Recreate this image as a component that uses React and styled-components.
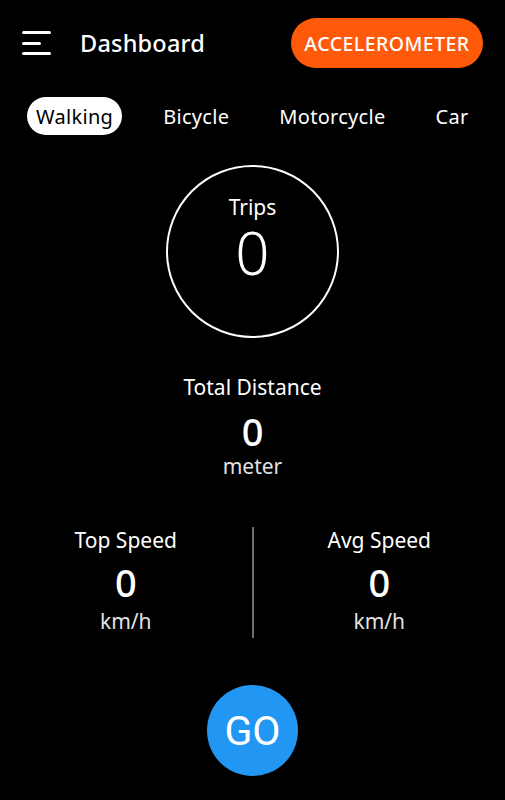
import React from "react";
import styled, { createGlobalStyle } from "styled-components";

const Global = createGlobalStyle`
  html, body { margin: 0; padding: 0; background: #000; }
  body { font-family: "Noto Sans", "DejaVu Sans", sans-serif; color: #fff; }
  * { box-sizing: border-box; }
`;

const Page = styled.div`
  width: 505px;
  height: 800px;
  background: #000;
  display: flex;
  flex-direction: column;
  overflow: hidden;
`;

const Header = styled.header`
  display: flex;
  align-items: center;
  padding: 18px 22px 0 22px;
  height: 68px;
`;

const MenuButton = styled.button`
  width: 29px;
  height: 24px;
  padding: 0;
  border: 0;
  background: none;
  display: flex;
  flex-direction: column;
  justify-content: space-between;
  align-items: flex-start;
  cursor: pointer;
`;

const MenuLine = styled.span`
  display: block;
  height: 3px;
  width: ${(p) => p.$w}px;
  border-radius: 2px;
  background: #fff;
`;

const Title = styled.h1`
  margin: 0 0 0 29px;
  font-size: 23.5px;
  font-weight: 500;
  letter-spacing: 0.2px;
`;

const AccelButton = styled.button`
  margin-left: auto;
  width: 192px;
  height: 50px;
  border-radius: 25px;
  border: 0;
  background: #ff5a0a;
  color: #fff;
  font-family: inherit;
  font-size: 19.5px;
  font-weight: 500;
  letter-spacing: 0.45px;
  padding: 0;
  cursor: pointer;
`;

const Tabs = styled.nav`
  display: flex;
  align-items: center;
  gap: 32px;
  padding: 29px 0 0 27px;
`;

const Tab = styled.button`
  height: 38px;
  padding: 0 9px;
  border: 0;
  border-radius: 19px;
  background: ${(p) => (p.$active ? "#fff" : "transparent")};
  color: ${(p) => (p.$active ? "#000" : "#fff")};
  font-family: inherit;
  font-size: 20px;
  letter-spacing: 0.3px;
  white-space: nowrap;
  cursor: pointer;
`;

const Ring = styled.div`
  align-self: center;
  margin-top: 30px;
  width: 173px;
  height: 173px;
  border: 2px solid #fff;
  border-radius: 50%;
  display: flex;
  flex-direction: column;
  align-items: center;
  padding-top: 27px;
`;

const Label = styled.div`
  font-size: 21px;
  line-height: 26px;
  color: #fff;
`;

const BigValue = styled.div`
  font-size: 60px;
  font-weight: 300;
  line-height: 64px;
`;

const Block = styled.div`
  display: flex;
  flex-direction: column;
  align-items: center;
  margin-top: 36px;
`;

const Value = styled.div`
  font-size: 38px;
  font-weight: 500;
  line-height: 44px;
  margin-top: ${(p) => p.$mt}px;
`;

const Unit = styled.div`
  font-size: 21px;
  line-height: 26px;
  color: #e2e2e2;
  margin-top: ${(p) => p.$mt}px;
`;

const StatsRow = styled.div`
  display: grid;
  grid-template-columns: 1fr 2px 1fr;
  margin-top: 48px;
`;

const Divider = styled.div`
  width: 2px;
  height: 111px;
  background: #6e6e6e;
`;

const StatCol = styled.div`
  display: flex;
  flex-direction: column;
  align-items: center;
`;

const GoButton = styled.button`
  align-self: center;
  margin-top: 47px;
  width: 91px;
  height: 91px;
  border-radius: 50%;
  border: 0;
  background: #2196f3;
  color: #fff;
  font-family: Roboto, "Noto Sans", sans-serif;
  font-size: 41px;
  cursor: pointer;
  padding: 0;
`;

export default function App() {
  const tabs = ["Walking", "Bicycle", "Motorcycle", "Car"];
  return (
    <>
      <Global />
      <Page>
        <Header>
          <MenuButton aria-label="menu">
            <MenuLine $w={29} />
            <MenuLine $w={19} />
            <MenuLine $w={29} />
          </MenuButton>
          <Title>Dashboard</Title>
          <AccelButton>ACCELEROMETER</AccelButton>
        </Header>
        <Tabs>
          {tabs.map((t, i) => (
            <Tab key={t} $active={i === 0}>
              {t}
            </Tab>
          ))}
        </Tabs>
        <Ring>
          <Label>Trips</Label>
          <BigValue>0</BigValue>
        </Ring>
        <Block>
          <Label>Total Distance</Label>
          <Value $mt={9}>0</Value>
          <Unit $mt={0}>meter</Unit>
        </Block>
        <StatsRow>
          <StatCol>
            <Label>Top Speed</Label>
            <Value $mt={7}>0</Value>
            <Unit $mt={4}>km/h</Unit>
          </StatCol>
          <Divider />
          <StatCol>
            <Label>Avg Speed</Label>
            <Value $mt={7}>0</Value>
            <Unit $mt={4}>km/h</Unit>
          </StatCol>
        </StatsRow>
        <GoButton>GO</GoButton>
      </Page>
    </>
  );
}
